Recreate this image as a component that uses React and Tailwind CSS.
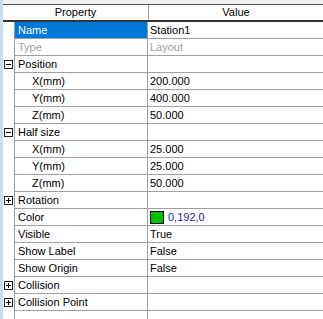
import React from "react";

const rows = [
  { name: "Name", value: "Station1", selected: true },
  { name: "Type", value: "Layout", muted: true },
  { name: "Position", toggle: "minus" },
  { name: "X(mm)", value: "200.000", child: true },
  { name: "Y(mm)", value: "400.000", child: true },
  { name: "Z(mm)", value: "50.000", child: true },
  { name: "Half size", toggle: "minus" },
  { name: "X(mm)", value: "25.000", child: true },
  { name: "Y(mm)", value: "25.000", child: true },
  { name: "Z(mm)", value: "50.000", child: true },
  { name: "Rotation", toggle: "plus" },
  { name: "Color", value: "0,192,0", color: true },
  { name: "Visible", value: "True" },
  { name: "Show Label", value: "False" },
  { name: "Show Origin", value: "False" },
  { name: "Collision", toggle: "plus" },
  { name: "Collision Point", toggle: "plus" },
];

const Toggle = ({ type }) => (
  <svg width="9" height="9" viewBox="0 0 9 9" className="block">
    <rect x="0.5" y="0.5" width="8" height="8" fill="white" stroke="#222" />
    <line x1="2" y1="4.5" x2="7" y2="4.5" stroke="#000" />
    {type === "plus" && <line x1="4.5" y1="2" x2="4.5" y2="7" stroke="#000" />}
  </svg>
);

const App = () => {
  return (
    <div
      className="w-[323px] h-[319px] flex bg-white text-[11px] text-black overflow-hidden"
      style={{ fontFamily: '"Liberation Sans", Arial, sans-serif' }}
    >
      {/* left edge strip */}
      <div className="w-[3px] bg-[#c8dcf2]" />

      <div className="flex-1 flex flex-col">
        <div className="h-[4px] bg-[#f0f0f0]" />

        {/* Header */}
        <div className="h-[18px] flex border-t border-[#555] border-b-2 border-b-[#333]">
          <div className="w-[146px] border-r border-[#a0a0a0] flex items-center justify-center">
            Property
          </div>
          <div className="flex-1 flex items-center justify-center">Value</div>
        </div>

        {/* Rows */}
        {rows.map((r, i) => (
          <div key={i} className="h-[17px] flex">
            <div className="w-[12px] flex items-center pl-[1px] border-r border-[#a0a0a0]">
              {r.toggle && <Toggle type={r.toggle} />}
            </div>
            <div
              className={`w-[133px] flex items-center border-r border-b border-[#a0a0a0] ${
                r.child ? "pl-[17px]" : "pl-[3px]"
              } ${r.selected ? "bg-[#0078d7] text-white" : ""} ${r.muted ? "text-[#a0a0a0]" : ""}`}
            >
              {r.name}
            </div>
            <div
              className={`flex-1 flex items-center pl-[2px] border-b border-[#a0a0a0] ${
                r.muted ? "text-[#a0a0a0]" : ""
              }`}
            >
              {r.color ? (
                <>
                  <span className="w-[14px] h-[13px] bg-[#00c000] border border-black mr-[4px]" />
                  <span className="text-[#1c1cb4]">{r.value}</span>
                </>
              ) : (
                r.value
              )}
            </div>
          </div>
        ))}

        {/* Empty filler */}
        <div className="flex-1 flex">
          <div className="w-[12px] border-r border-[#a0a0a0]" />
          <div className="w-[133px] border-r border-[#a0a0a0]" />
          <div className="flex-1" />
        </div>
      </div>
    </div>
  );
};

export default App;
